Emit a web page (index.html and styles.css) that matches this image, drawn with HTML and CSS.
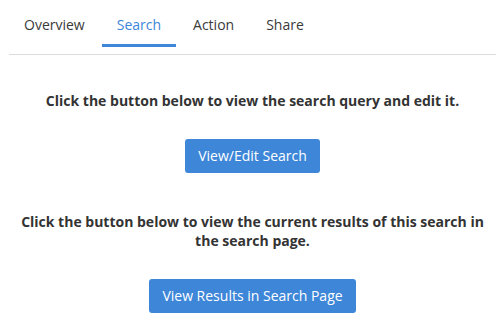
FILE: index.html
```html
<!DOCTYPE html>
<html lang="en">
<head>
  <meta charset="UTF-8">
  <meta name="viewport" content="width=device-width, initial-scale=1.0">
  <title>Saved search</title>
  <link rel="stylesheet" href="styles.css">
</head>
<body>
  <div class="tabs">
    <a class="tab" href="#">Overview</a>
    <a class="tab active" href="#">Search</a>
    <a class="tab" href="#">Action</a>
    <a class="tab" href="#">Share</a>
  </div>

  <div class="panel">
    <div class="block first">
      <p>Click the button below to view the search query and edit it.</p>
      <button type="button">View/Edit Search</button>
    </div>
    <div class="block">
      <p>Click the button below to view the current results of this search in the search page.</p>
      <button type="button">View Results in Search Page</button>
    </div>
  </div>
</body>
</html>
```

FILE: styles.css
```css
* { box-sizing: border-box; }
body {
  margin: 0;
  padding: 0 4px 0 9px;
  font-family: 'Open Sans', sans-serif;
  font-size: 14px;
  color: #333;
  background: #fff;
}
.tabs {
  display: flex;
  padding-top: 15px;
  padding-bottom: 7px;
  border-bottom: 1px solid #ddd;
}
.tab {
  display: block;
  padding: 0 15px 9px;
  margin-right: 2px;
  line-height: 20px;
  color: #3a3a3a;
  text-decoration: none;
  border-bottom: 3px solid transparent;
}
.tab.active {
  color: #3d86d8;
  border-bottom-color: #3d86d8;
}
.panel {
  padding: 0 9px;
  text-align: center;
}
.block {
  padding-top: 40px;
}
.block.first {
  padding-top: 36px;
}
.block p {
  margin: 0 0 29px;
  font-weight: bold;
  line-height: 18.5px;
  color: #333;
}
.block.first p {
  line-height: 19px;
}
button {
  font-family: 'Open Sans', sans-serif;
  font-size: 14px;
  line-height: 20px;
  padding: 7px 13px;
  border: none;
  border-radius: 3px;
  background: #3d86d8;
  color: #fff;
  cursor: pointer;
}
```
